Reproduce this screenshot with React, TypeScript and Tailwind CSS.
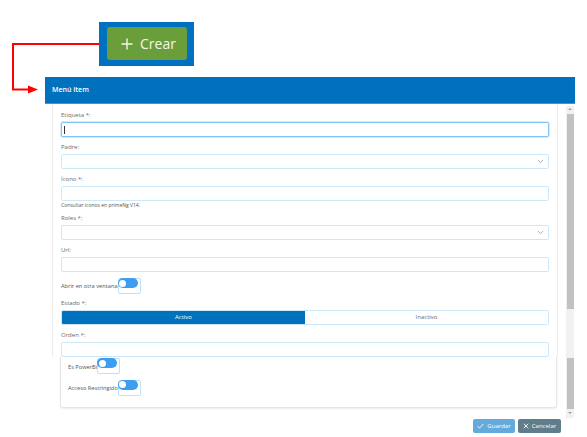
import React from "react";

const font = { fontFamily: '"Open Sans", "Liberation Sans", sans-serif' };

const labelCls = "block h-[10px] mb-[2px] text-[6px] leading-[10px] text-[#6b6b6b]";
const inputCls = "h-[15px] w-full rounded-[2px] border border-[#cde7fb] bg-white";

const Chevron: React.FC = () => (
  <svg width="7" height="5" viewBox="0 0 7 5">
    <path d="M0.8 1 L3.5 3.6 L6.2 1" stroke="#9aa3ab" strokeWidth="0.9" fill="none" />
  </svg>
);

const Toggle: React.FC = () => (
  <div className="flex h-[16px] w-[23px] items-start rounded-[2px] border border-[#bfe0f8] bg-white">
    <div className="-ml-px -mt-px flex h-[10px] w-[20px] items-center rounded-full bg-[#3d9df0] pl-[1.5px]">
      <div className="h-[7px] w-[7px] rounded-full bg-white" />
    </div>
  </div>
);

const Field: React.FC<{ label: string; select?: boolean; focused?: boolean }> = ({
  label,
  select,
  focused,
}) => (
  <div>
    <span className={labelCls}>{label}</span>
    {focused ? (
      <div className="flex h-[15px] w-full items-center rounded-[2px] border-[1.5px] border-[#82c5f4] bg-white pl-[2px] shadow-[0_0_0_1px_#d6ecfc]">
        <div className="h-[8px] w-px bg-[#333]" />
      </div>
    ) : (
      <div className={`${inputCls} flex items-center justify-end pr-[4px]`}>{select && <Chevron />}</div>
    )}
  </div>
);

export default function App() {
  return (
    <div className="relative h-[437px] w-[587px] overflow-hidden bg-white" style={font}>
      {/* red connector */}
      <svg className="pointer-events-none absolute left-0 top-0" width="100" height="100" viewBox="0 0 100 100">
        <path d="M99 44 H13 V89.5 H30" stroke="#ff0000" strokeWidth="2" fill="none" />
        <polygon points="28,85.5 38,89.5 28,93.5" fill="#ff0000" />
      </svg>

      {/* Crear */}
      <div className="h-[77px] pt-[22px]">
        <div className="ml-[99px] h-[44px] w-[95px] bg-[#0070c0] pl-[8px] pt-[5px]">
          <div className="flex h-[33px] w-[80px] items-center gap-[7px] rounded-[3px] bg-[#6a9e3a] pl-[14px] text-[14px] text-[#f4f6ec]">
            <svg width="12" height="12" viewBox="0 0 12 12">
              <path d="M6 0.5 V11.5 M0.5 6 H11.5" stroke="#f4f6ec" strokeWidth="1.4" />
            </svg>
            <span className="leading-none">Crear</span>
          </div>
        </div>
      </div>

      {/* Dialog */}
      <div className="ml-[45px] w-[530px]">
        <div className="flex h-[27px] items-center border-b border-[#3f97d2] bg-[#0071bc] pl-[7px] text-[7px] font-semibold text-white">
          Menú Item
        </div>

        <div className="flex h-[333px]">
          <div className="w-[521px] pl-[7px]">
            {/* form */}
            <div className="w-[506px] border-l border-r border-[#ececec] px-[8px] pt-[6px]">
              <Field label="Etiqueta *:" focused />
              <div className="mt-[5px]">
                <Field label="Padre:" select />
              </div>
              <div className="mt-[5px]">
                <Field label="Ícono *:" />
                <div className="h-[8px] text-[5px] leading-[8px] text-[#555]">Consultar iconos en primeNg V14.</div>
              </div>
              <div className="mt-[4px]">
                <Field label="Roles *:" select />
              </div>
              <div className="mt-[5px]">
                <Field label="Url:" />
              </div>
              <div className="mt-[6px] flex h-[16px] items-center">
                <span className="mt-[1px] text-[5.7px] text-[#555]">Abrir en otra ventana</span>
                <Toggle />
              </div>
              <div className="mt-[4px]">
                <span className={labelCls}>Estado *:</span>
                <div className="flex h-[15px] w-full overflow-hidden rounded-[2px] border border-[#cde7fb] text-[6px]">
                  <div className="flex flex-1 items-center justify-center bg-[#0071bc] text-white">Activo</div>
                  <div className="flex flex-1 items-center justify-center bg-white text-[#6b6b6b]">Inactivo</div>
                </div>
              </div>
              <div className="mt-[5px]">
                <Field label="Orden *:" />
              </div>
            </div>

            {/* toggles card */}
            <div className="ml-[8px] h-[51px] w-[497px] rounded-b-[3px] border-b border-l border-r border-[#e6e6e6] pl-[7px] pt-[2px] shadow-[0_1px_2px_rgba(0,0,0,0.08)]">
              <div className="flex h-[14px] items-center">
                <span className="mt-[2px] text-[5.7px] text-[#555]">Es PowerBi</span>
                <Toggle />
              </div>
              <div className="mt-[7px] flex h-[15px] items-center">
                <span className="mt-[1px] text-[5.7px] text-[#555]">Acceso Restringido</span>
                <Toggle />
              </div>
            </div>

            {/* footer */}
            <div className="mt-[11px] flex justify-end gap-[3px] pr-[5px] text-[6px] text-white">
              <div className="flex h-[14px] w-[42px] items-center justify-center gap-[3px] rounded-[2px] bg-[#64aadb]">
                <svg width="7" height="6" viewBox="0 0 7 6">
                  <path d="M0.5 3 L2.6 5 L6.5 0.8" stroke="#fff" strokeWidth="0.9" fill="none" />
                </svg>
                Guardar
              </div>
              <div className="flex h-[14px] w-[43px] items-center justify-center gap-[3px] rounded-[2px] bg-[#607d8b]">
                <svg width="6" height="6" viewBox="0 0 6 6">
                  <path d="M0.7 0.7 L5.3 5.3 M5.3 0.7 L0.7 5.3" stroke="#fff" strokeWidth="0.9" />
                </svg>
                Cancelar
              </div>
            </div>
          </div>

          {/* scrollbar */}
          <div className="mt-[2px] flex h-[312px] w-[8px] flex-col items-center bg-[#f1f1f1]">
            <div className="mt-[2px] h-0 w-0 border-x-[2px] border-b-[2px] border-x-transparent border-b-[#a3a3a3]" />
            <div className="mt-[4px] h-[195px] w-[7px] bg-[#c1c1c1]" />
            <div className="h-[49px]" />
            <div className="h-[51px] w-[7px] bg-[#c1c1c1]" />
            <div className="mt-[3px] h-0 w-0 border-x-[2px] border-t-[2px] border-x-transparent border-t-[#a3a3a3]" />
          </div>
        </div>
      </div>
    </div>
  );
}
